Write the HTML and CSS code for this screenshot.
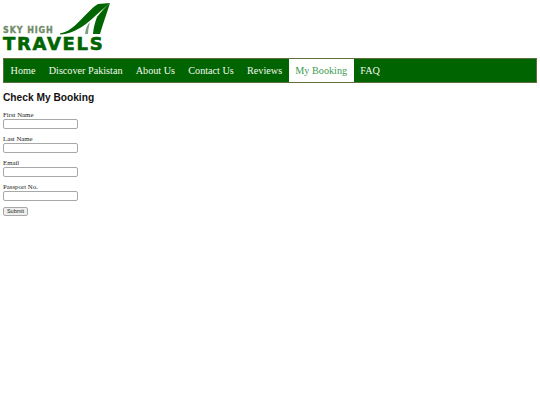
FILE: index.html
```html
<!DOCTYPE html>
<html lang="en">
<head>
  <meta charset="UTF-8">
  <title>Sky High Travels</title>
  <link rel="stylesheet" href="styles.css">
</head>
<body>

  <div class="logo">
    <div class="logo-top">
      <div class="logo-small">SKY HIGH</div>
      <svg class="logo-mark" width="52" height="32" viewBox="60 3 52 32">
        <path d="M60 33.500 C66 32.500 71 29 75 25.500 C80 21 84 16 88 12.500 C92 8.500 95 5.500 98 4 L110 3 C103 9 98 13 93 18 C89 21.500 86 24 83 26 C76 31 68 34 60 34.500 Z" fill="#006400"/>
        <path d="M110 3 C107 13 103 23 100 34 L93 34 C93.500 28 95 22 97 17 C101 12 105 7 110 3 Z" fill="#006400"/>
        <path d="M85 34 C85.500 29 87 25 90 22 C89 26 88 30 88 34 Z" fill="#7f9f7f"/>
      </svg>
    </div>
    <div class="logo-big">TRAVELS</div>
  </div>

  <ul class="nav">
    <li><a href="#">Home</a></li>
    <li><a href="#">Discover Pakistan</a></li>
    <li><a href="#">About Us</a></li>
    <li><a href="#">Contact Us</a></li>
    <li><a href="#">Reviews</a></li>
    <li><a href="#" class="active">My Booking</a></li>
    <li><a href="#">FAQ</a></li>
  </ul>

  <h3>Check My Booking</h3>

  <form class="booking-form">
    <div class="field">
      <label>First Name</label>
      <input type="text">
    </div>
    <div class="field">
      <label>Last Name</label>
      <input type="text">
    </div>
    <div class="field">
      <label>Email</label>
      <input type="text">
    </div>
    <div class="field">
      <label>Passport No.</label>
      <input type="text">
    </div>
    <button type="button" class="submit-btn">Submit</button>
  </form>

</body>
</html>
```

FILE: styles.css
```css
body {
  font-family: "Liberation Serif", serif;
  background: #fff;
  margin: 0;
  padding: 3px;
}

.logo {
  height: 48px;
  margin-bottom: 7px;
  font-family: "DejaVu Sans", sans-serif;
  font-weight: bold;
}

.logo-top {
  display: flex;
  justify-content: space-between;
  align-items: flex-end;
  width: 109px;
  height: 32px;
}

.logo-small {
  font-size: 8px;
  line-height: 8px;
  letter-spacing: 0.900px;
  color: #6f8a68;
  white-space: nowrap;
  -webkit-text-stroke: 0.300px #6f8a68;
}

.logo-mark {
  flex-shrink: 0;
}

.logo-big {
  margin-top: 1px;
  font-size: 18px;
  line-height: 15px;
  letter-spacing: 1.700px;
  color: #006400;
  white-space: nowrap;
  -webkit-text-stroke: 0.600px #006400;
}

.nav {
  list-style: none;
  display: flex;
  margin: 0;
  padding: 0;
  height: 23px;
  background: #006400;
  border: 1px solid #5f6f3f;
}

.nav a {
  display: block;
  padding: 0 6.600px;
  font-size: 10.200px;
  line-height: 23px;
  color: #f4f8f0;
  text-decoration: none;
}

.nav a.active {
  background: #fff;
  color: #3a9a50;
}

h3 {
  font-family: "Liberation Sans", sans-serif;
  font-size: 10.200px;
  line-height: 13px;
  margin: 8px 0 7px;
  color: #111;
}

.field {
  margin-bottom: 6px;
}

.field label {
  display: block;
  font-size: 6.800px;
  line-height: 8px;
  color: #222;
}

.field input {
  display: block;
  box-sizing: border-box;
  width: 75px;
  height: 10px;
  padding: 0;
  border: 1px solid #a8a8a8;
  border-radius: 2px;
  background: #fff;
}

.submit-btn {
  display: block;
  box-sizing: border-box;
  width: 25px;
  height: 9px;
  margin-top: 3px;
  padding: 0;
  font-family: "Liberation Sans", sans-serif;
  font-size: 5.500px;
  line-height: 7px;
  color: #222;
  background: #efefef;
  border: 1px solid #a8a8a8;
  border-radius: 2px;
}
```
